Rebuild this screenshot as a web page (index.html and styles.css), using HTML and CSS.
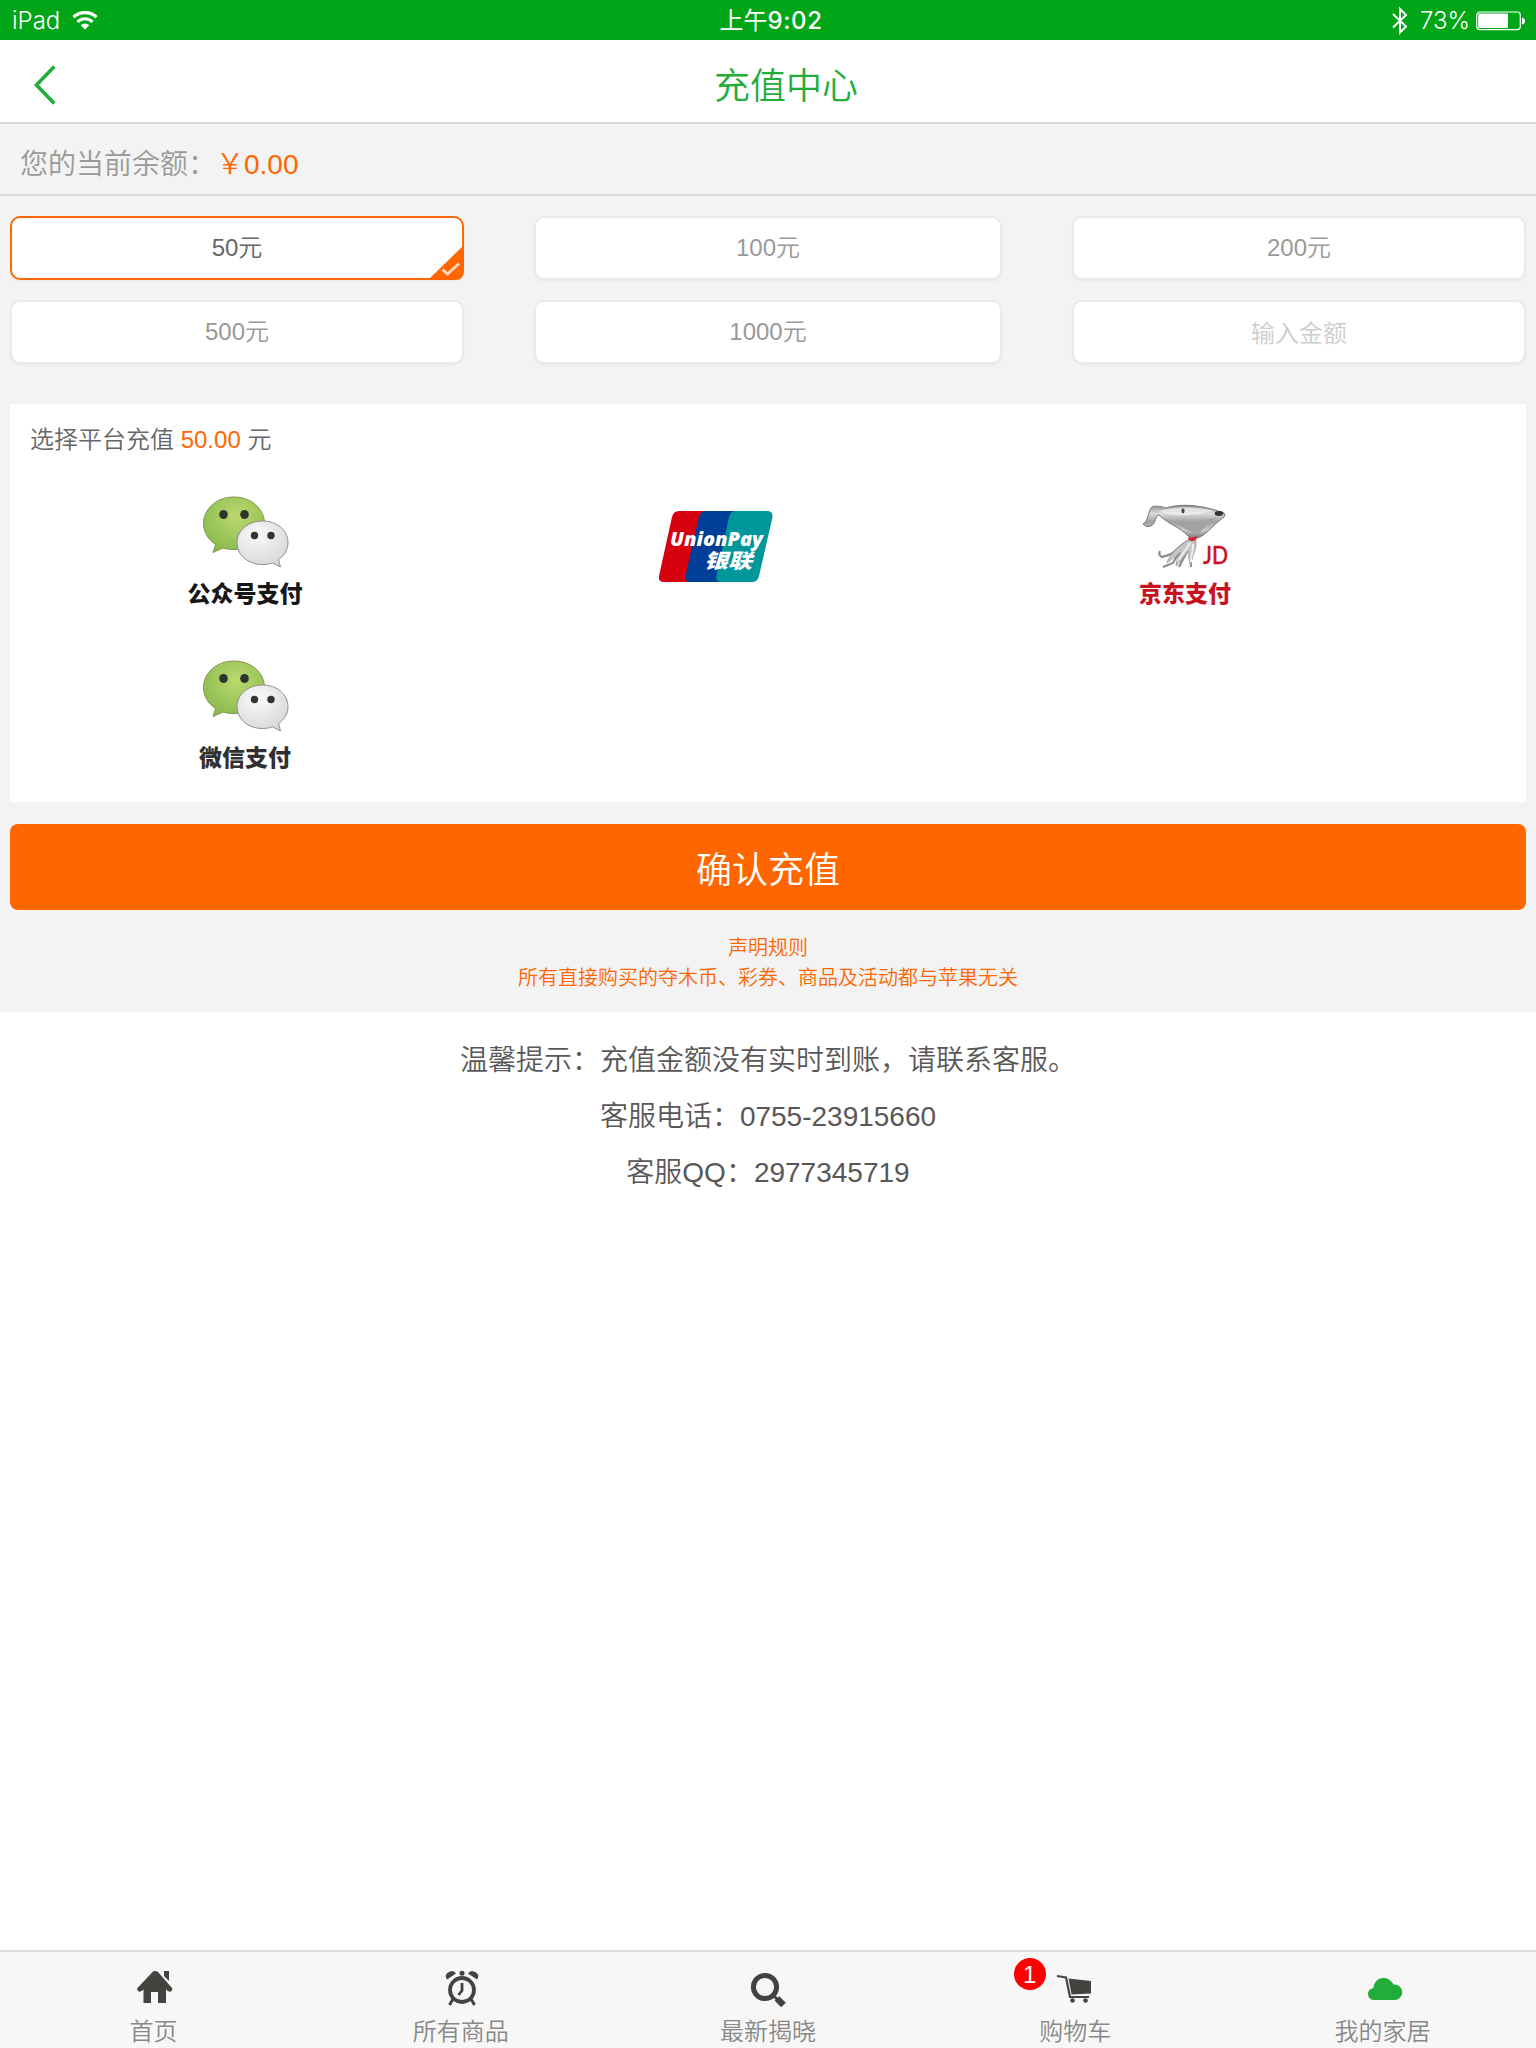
FILE: index.html
```html
<!DOCTYPE html>
<html lang="zh-CN">
<head>
<meta charset="utf-8">
<title>充值中心</title>
<link rel="stylesheet" href="styles.css">
</head>
<body>
<svg width="0" height="0" class="defs" aria-hidden="true">
  <defs>
    <radialGradient id="green" cx=".55" cy=".35" r=".65"><stop offset="0" stop-color="#bbd96f"/><stop offset="1" stop-color="#8abb4f"/></radialGradient>
    <radialGradient id="silver" cx=".4" cy=".3" r=".75"><stop offset="0" stop-color="#fafafb"/><stop offset="1" stop-color="#d5d6d8"/></radialGradient>
    <linearGradient id="steel" x1="0" y1="0" x2="0" y2="1"><stop offset="0" stop-color="#8a8a8a"/><stop offset=".25" stop-color="#dcdcdc"/><stop offset=".5" stop-color="#a0a0a0"/><stop offset=".75" stop-color="#cacaca"/><stop offset="1" stop-color="#777"/></linearGradient>
    <symbol id="wechat" viewBox="0 0 90 76">
      <path d="M33 3C16 3 2.500 14.500 2.500 29.500C2.500 38 7 45.500 14.500 50.500L12 58.500L22 54C26 55.200 30 55.700 34 55.500C51 55.500 63.500 44 63.500 29.500C63.500 14.500 50 3 33 3Z" fill="url(#green)" stroke="#84984f" stroke-width="1"/>
      <ellipse cx="22.500" cy="20.500" rx="4.300" ry="4.500" fill="#2e342b"/><ellipse cx="43.500" cy="20.500" rx="4.300" ry="4.500" fill="#2e342b"/>
      <path d="M61.500 27C47 27 36 36.500 36 48.500C36 61 47 70.500 61.500 70.500C65 70.500 68.500 70 71.500 68.800L79.500 73L77.500 65.500C83.500 61.500 87 55.500 87 48.500C87 36.500 76 27 61.500 27Z" fill="url(#silver)" stroke="#8d9090" stroke-width="1"/>
      <circle cx="53.500" cy="41.500" r="3.700" fill="#333"/><circle cx="70" cy="41.500" r="3.700" fill="#333"/>
    </symbol>
  </defs>
</svg>

<div class="status">
  <div class="status-left"><span>iPad</span>
    <svg class="wifi" viewBox="0 0 26 19" width="26" height="19"><path d="M1.500 6.200a16.500 16.500 0 0 1 23 0" fill="none" stroke="#fff" stroke-width="3.200"/><path d="M5.500 11a10.500 10.500 0 0 1 15 0" fill="none" stroke="#fff" stroke-width="3"/><path d="M13 18.500L8.700 14.300a6 6 0 0 1 8.600 0z" fill="#fff"/></svg>
  </div>
  <div class="status-time">上午<span>9:02</span></div>
  <div class="status-right">
    <svg viewBox="0 0 16 28" width="16" height="28"><path d="M1 7L14 19.500L8 25.500V2L14 8L1 20.500" fill="none" stroke="#fff" stroke-width="2"/></svg>
    <span>73%</span>
    <svg viewBox="0 0 50 20" width="50" height="20"><rect x=".7" y="1" width="43.600" height="17.600" rx="3" fill="none" stroke="#fff" stroke-width="1.200"/><rect x="2.200" y="2.500" width="29.800" height="14.600" rx="1" fill="#fff"/><path d="M46 6.500q3 1 3 3.500t-3 3.500z" fill="#fff"/></svg>
  </div>
</div>

<header class="header">
  <svg class="back" viewBox="0 0 22 40" width="22" height="40"><path d="M20.300 1.500L2.500 20L20.300 38.500" fill="none" stroke="#22ac38" stroke-width="3.600"/></svg>
  <h1>充值中心</h1>
</header>

<main>
  <div class="balance"><span>您的当前余额：</span><b>￥0.00</b></div>
  <div class="amounts">
    <div class="amount selected">50元
      <svg class="corner" viewBox="0 0 36 35" width="36" height="35"><path d="M0 35L36 0V25Q36 35 27 35Z" fill="#f60"/><path d="M14.500 24.500L19.500 29L31 18.500" fill="none" stroke="#ffd9c0" stroke-width="2.800"/></svg>
    </div>
    <div class="amount">100元</div>
    <div class="amount">200元</div>
    <div class="amount">500元</div>
    <div class="amount">1000元</div>
    <div class="amount placeholder">输入金额</div>
  </div>

  <section class="panel">
    <p class="panel-title">选择平台充值 <b>50.00</b> 元</p>
    <div class="methods">
      <div class="method"><svg class="wechat" width="90" height="76"><use href="#wechat"/></svg><span class="pay-name">公众号支付</span></div>
      <div class="method">
        <svg class="union" viewBox="0 0 118 76" width="118" height="76">
          <path d="M22 1H62L47 72H7Q1 72 2 66L15 7Q16.500 1 22 1Z" fill="#d7000f"/>
          <path d="M49 1H88L73 72H34Q27 72 28.500 66L42 7Q43.500 1 49 1Z" fill="#003f98"/>
          <path d="M78 1H110Q116.500 1 115.300 8L102 66Q100.500 72 95 72H65Q58 72 59.500 66L72 7Q73.500 1 78 1Z" fill="#00979b"/>
          <text x="13" y="36" class="union-en" textLength="93" lengthAdjust="spacingAndGlyphs">UnionPay</text>
          <text x="47" y="58" class="union-cn" textLength="48" lengthAdjust="spacingAndGlyphs">银联</text>
        </svg>
      </div>
      <div class="method">
        <svg class="joy" viewBox="0 0 90 76" width="90" height="76">
          <path d="M47 45C40 49 38 51 33 56C27 62 24 60 20 62Q16 60 18 56M49 46C44 52 36 57 31 68L21 72M50 47C47 55 42 61 37 72M51 47C54 55 47 62 49 72" fill="none" stroke="#8d8d8d" stroke-width="2.200"/>
          <path d="M46 45L54 46C55 54 50 60 49 70C45 64 48 58 46 56C42 62 38 66 34 71C34 65 37 61 39 57C33 61 29 65 25 68C27 60 36 52 46 45Z" fill="#c6c6c6" stroke="#9a9a9a" stroke-width=".8"/>
          <path d="M48 48C44 55 39 60 36 66M51 49C51 57 49 61 49 67" fill="none" stroke="#f1f1f1" stroke-width="1.800"/>
          <path d="M1 29C7 26 6 15 10 12C14 10 21 12 24 13C39 8 61 10 82 18Q84 20 82 22C72 29 66 38 58 42Q52 45 46 41C38 32 26 29 17 20C13 20 14 29 9 31Q4 33 1 29Z" fill="url(#steel)" stroke="#777" stroke-width="1"/>
          <path d="M17 16C36 10 57 12 72 16C55 20 33 23 17 16Z" fill="#f3f3f3" opacity=".7"/>
          <path d="M25 24C42 31 63 26 75 22C66 28 60 36 55 39C47 36 38 31 25 24Z" fill="#a2a2a2"/>
          <ellipse cx="41" cy="16" rx="1.600" ry="2.400" fill="#444"/><ellipse cx="77" cy="18.500" rx="4.300" ry="2.400" fill="#343434"/>
          <path d="M46 42Q51 44 55 41L54 45Q50 47 47 45Z" fill="#dc2027"/>
          <text x="61" y="69" class="jd" textLength="25" lengthAdjust="spacingAndGlyphs">JD</text>
        </svg><span class="pay-name red">京东支付</span>
      </div>
      <div class="method"><svg class="wechat" width="90" height="76"><use href="#wechat"/></svg><span class="pay-name soft">微信支付</span></div>
    </div>
  </section>

  <button class="confirm">确认充值</button>
  <div class="rules">声明规则<br>所有直接购买的夺木币、彩券、商品及活动都与苹果无关</div>
</main>

<section class="tips">
  <p>温馨提示：充值金额没有实时到账，请联系客服。</p>
  <p>客服电话：0755-23915660</p>
  <p>客服QQ：2977345719</p>
</section>

<nav class="tabs">
  <div class="tab">
    <svg class="home" viewBox="0 0 40 40" width="40" height="40"><path d="M20 3Q18.500 3 17.500 4L2.500 20Q1.500 21.500 3 23Q4.500 24.500 6.500 23L8.500 21.500V35H16V24H23V35H31V21.500L33 23Q35 24.500 36.500 23T37 20L23 4Q21.500 3 20 3Z" fill="#444340"/><path d="M29 3H34V13L29 8Z" fill="#444340"/></svg>
    <span>首页</span>
  </div>
  <div class="tab">
    <svg class="clock" viewBox="0 0 40 40" width="40" height="40"><g fill="none" stroke="#444340"><circle cx="20" cy="22" r="12" stroke-width="3.800"/><path d="M20 15V22.500L16.500 27" stroke-width="2.800"/><path d="M11 31L7.500 37M29 31L32.500 37" stroke-width="3"/></g><g fill="#444340"><circle cx="20" cy="5.300" r="2.500"/><path d="M5 11.500Q2 7 6 4.500Q11 1 14 5.500ZM35 11.500Q38 7 34 4.500Q29 1 26 5.500Z"/></g></svg>
    <span>所有商品</span>
  </div>
  <div class="tab">
    <svg class="search" viewBox="0 0 40 40" width="40" height="40"><circle cx="17" cy="19" r="11.600" fill="none" stroke="#444340" stroke-width="5"/><path d="M25 27L30 32" stroke="#444340" stroke-width="3"/><path d="M29 30.500L35.500 37" stroke="#444340" stroke-width="6.500"/></svg>
    <span>最新揭晓</span>
  </div>
  <div class="tab">
    <i class="badge">1</i>
    <svg class="cart" viewBox="0 0 40 40" width="40" height="40"><path d="M2 8L11 9.500L15 29H34" fill="none" stroke="#444340" stroke-width="2.200"/><path d="M13.500 10.500L36 13V25.500L16.500 26.500Z" fill="#444340"/><circle cx="17.500" cy="32.500" r="2.300" fill="#444340"/><circle cx="30.500" cy="32.500" r="2.300" fill="#444340"/></svg>
    <span>购物车</span>
  </div>
  <div class="tab">
    <svg class="cloud" viewBox="0 0 40 40" width="40" height="40"><path d="M8.500 32H28.500A7.800 7.800 0 0 0 28.500 16.400H27.500C25 12.500 22 10 17.500 10C12 10 8 14 7.500 20C4.500 20.700 2 22.500 2 26Q2.500 32 8.500 32Z" fill="#22ac38"/></svg>
    <span>我的家居</span>
  </div>
</nav>
</body>
</html>
```
FILE: styles.css
```css
* { box-sizing: border-box; }
body {
  margin: 0;
  height: 2048px;
  display: flex;
  flex-direction: column;
  background: #fff;
  font-family: "Liberation Sans", "Noto Sans CJK SC DemiLight", "Noto Sans CJK SC", sans-serif;
  font-weight: 350;
  color: #666;
}
b, i, h1 { font-weight: inherit; font-style: normal; margin: 0; }
p { margin: 0; }
svg { display: block; flex: none; }
.defs { position: absolute; }

.status {
  height: 40px;
  flex: none;
  display: grid;
  grid-template-columns: 1fr auto 1fr;
  align-items: center;
  padding: 1px 11px 0 12px;
  background: #00a617;
  color: #fff;
  font-family: Inter, "Noto Sans CJK SC", sans-serif;
  font-weight: 300;
  font-size: 24px;
}
.status-left, .status-right { display: flex; align-items: center; }
.status-left { gap: 12px; }
.status-right { justify-content: flex-end; gap: 6px; margin-right: -1px; }
.status-right span { margin-left: 6px; }
.status-time { font-weight: 400; line-height: 34px; padding: 0 0 0 5px; }
.status-time span { font-weight: 500; letter-spacing: .6px; }

.header {
  height: 84px;
  flex: none;
  display: grid;
  grid-template-columns: 22px 1fr;
  align-items: center;
  padding: 8px 0 0 34px;
  border-bottom: 2px solid #d9d9d9;
}
.header h1 { color: #22ac38; font-size: 36px; text-align: center; line-height: 50px; padding: 3px 20px 0 0; }

main { background: #f3f3f3; height: 888px; flex: none; }
.balance {
  height: 72px;
  padding: 6px 20px 0;
  border-bottom: 2px solid #d9d9d9;
  display: flex;
  align-items: center;
  font-size: 28px;
  color: #999;
}
.balance b { color: #f60; }
.amounts {
  display: grid;
  grid-template-columns: 454px 468px 454px;
  grid-auto-rows: 64px;
  justify-content: space-between;
  row-gap: 20px;
  padding: 20px 10px 0;
}
.amount {
  position: relative;
  display: flex;
  align-items: center;
  justify-content: center;
  padding-bottom: 5px;
  background: #fff;
  border: 2px solid #e9e9e9;
  border-radius: 10px;
  box-shadow: 0 2px 2px rgba(0, 0, 0, .03);
  font-size: 24px;
  color: #999;
}
.selected { border-color: #f60; color: #666; }
.corner { position: absolute; right: -2px; bottom: -2px; }
.placeholder { color: #ccc; padding-bottom: 2px; }

.panel { height: 398px; margin: 40px 10px 0; padding: 17px 0 0; background: #fff; }
.panel-title { padding-left: 20px; font-size: 24px; line-height: 38px; }
.panel-title b { color: #f60; }
.methods {
  display: grid;
  grid-template-columns: repeat(3, 470px);
  grid-auto-rows: 164px;
  padding-top: 35px;
}
.method { display: flex; flex-direction: column; align-items: center; }
.wechat { margin-left: 2px; }
.joy { margin: 1px 0 0 4px; }
.union { margin: 16px 0 0 2px; }
.pay-name { font: 900 23px/30px "Noto Sans CJK SC", sans-serif; color: #171717; margin-top: 7px; white-space: nowrap; }
.pay-name.soft { color: #303030; }
.pay-name.red { color: #c7131f; margin-top: 6px; }
.union-en { font: italic 800 20px "Open Sans", sans-serif; fill: #fff; }
.union-cn { font: italic 900 20px "Noto Sans CJK SC", sans-serif; fill: #fff; }
.jd { font: 500 25px Lato, sans-serif; fill: #c7131f; stroke: #c7131f; stroke-width: .4px; }

.confirm {
  display: block;
  width: 1516px;
  height: 86px;
  margin: 22px 10px 0;
  padding: 0 0 1px;
  border: 0;
  border-radius: 8px;
  background: #f60;
  color: #fff;
  font: inherit;
  font-size: 36px;
}
.rules { padding-top: 23px; text-align: center; color: #f60; font-size: 20px; line-height: 30px; }

.tips { flex: 1; padding-top: 21px; text-align: center; font-size: 28px; line-height: 56px; color: #595757; }

.tabs {
  height: 98px;
  flex: none;
  display: grid;
  grid-template-columns: repeat(5, 1fr);
  border-top: 2px solid #d9d9d9;
  background: #f7f7f7;
}
.tab {
  position: relative;
  display: flex;
  flex-direction: column;
  align-items: center;
  padding-top: 16px;
  font-size: 24px;
  line-height: 36px;
  color: #888;
}
.tab svg { margin-bottom: 6px; }
.tab .home, .tab .clock { margin-left: 3px; }
.tab .cloud { margin-left: 8px; }
.badge {
  position: absolute;
  left: 92px;
  top: 6px;
  width: 32px;
  height: 32px;
  border-radius: 50%;
  background: #f00;
  color: #fff;
  text-align: center;
  font-size: 24px;
  line-height: 34px;
}
```
